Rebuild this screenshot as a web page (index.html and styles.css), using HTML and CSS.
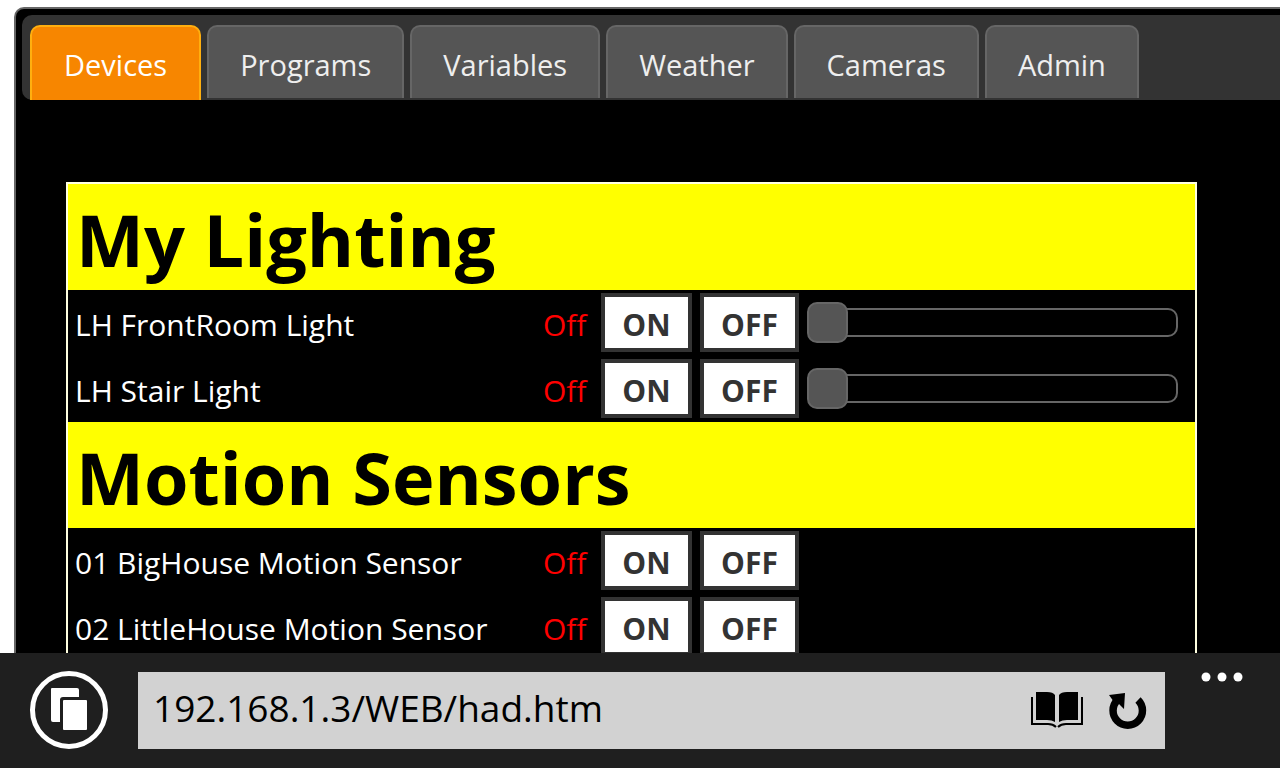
FILE: index.html
```
<!DOCTYPE html>
<html lang="en">
<head>
	<meta charset="utf-8">
	<title>Devices</title>
	<link rel="stylesheet" href="styles.css">
</head>
<body>
	<main class="view">
		<div class="panel">
			<nav class="tabs">
				<a class="tab active" href="#devices">Devices</a>
				<a class="tab" href="#programs">Programs</a>
				<a class="tab" href="#variables">Variables</a>
				<a class="tab" href="#weather">Weather</a>
				<a class="tab" href="#cameras">Cameras</a>
				<a class="tab" href="#admin">Admin</a>
			</nav>

			<table class="devices" id="devices">
				<colgroup>
					<col>
					<col class="col-status">
					<col class="col-on">
					<col class="col-off">
					<col class="col-level">
				</colgroup>
				<tbody>
					<tr><th class="group" colspan="5">My Lighting</th></tr>
					<tr>
						<th class="name" scope="row">LH FrontRoom Light</th>
						<td class="status">Off</td>
						<td><button class="switch" type="button">ON</button></td>
						<td><button class="switch" type="button">OFF</button></td>
						<td><input class="level" type="range" min="0" max="100" value="0" aria-label="LH FrontRoom Light"></td>
					</tr>
					<tr>
						<th class="name" scope="row">LH Stair Light</th>
						<td class="status">Off</td>
						<td><button class="switch" type="button">ON</button></td>
						<td><button class="switch" type="button">OFF</button></td>
						<td><input class="level" type="range" min="0" max="100" value="0" aria-label="LH Stair Light"></td>
					</tr>
				</tbody>
				<tbody>
					<tr><th class="group" colspan="5">Motion Sensors</th></tr>
					<tr>
						<th class="name" scope="row">01 BigHouse Motion Sensor</th>
						<td class="status">Off</td>
						<td><button class="switch" type="button">ON</button></td>
						<td><button class="switch" type="button">OFF</button></td>
						<td></td>
					</tr>
					<tr>
						<th class="name" scope="row">02 LittleHouse Motion Sensor</th>
						<td class="status">Off</td>
						<td><button class="switch" type="button">ON</button></td>
						<td><button class="switch" type="button">OFF</button></td>
						<td></td>
					</tr>
				</tbody>
			</table>
		</div>
	</main>

	<footer class="bar">
		<button class="icon-btn" type="button" aria-label="Tabs">
			<svg width="80" height="80" viewBox="0 0 80 80">
				<circle cx="40" cy="39" r="36.500" fill="none" stroke="#fff" stroke-width="5"/>
				<path fill="#fff" d="M23 17h25q2 0 2 2v7H34q-3 0-3 3v22h-7q-2 0-2-2V18q0-1 1-1z"/>
				<rect x="34" y="29" width="24" height="30" rx="1" fill="#fff"/>
			</svg>
		</button>
		<form class="address">
			<input class="url" type="text" aria-label="Address" value="192.168.1.3/WEB/had.htm">
			<button class="icon-btn" type="button" aria-label="Reading view">
				<svg width="52" height="38" viewBox="0 0 52 38">
					<path d="M5 0h11q6 0 8 3v27q-3-2-8-2H5zM47 0H36q-6 0-8 3v27q3-2 8-2h11z"/>
					<path fill="none" stroke="#000" stroke-width="2" d="M1 5v27h16q5 0 8 3M51 5v27H35q-5 0-8 3"/>
				</svg>
			</button>
			<button class="icon-btn" type="button" aria-label="Refresh">
				<svg width="38" height="38" viewBox="0 0 38 38">
					<path fill="none" stroke="#000" stroke-width="7.500" d="M29 8A14.700 14.700 0 1 1 8.500 8"/>
					<path d="M0 3l16-2-1 16-5-5-5-2z"/>
				</svg>
			</button>
		</form>
		<button class="icon-btn more" type="button" aria-label="More">
			<svg width="42" height="10" viewBox="0 0 42 10">
				<g fill="#fff"><circle cx="5" cy="5" r="4.500"/><circle cx="21" cy="5" r="4.500"/><circle cx="37" cy="5" r="4.500"/></g>
			</svg>
		</button>
	</footer>
</body>
</html>
```
FILE: styles.css
```
* {
  box-sizing: border-box;
}
body {
  margin: 0;
  height: 100vh;
  display: flex;
  flex-direction: column;
  font-family: "Open Sans", "Noto Sans", sans-serif;
  font-size: 30px;
  background-color: #fff;
}

/* page */
.view {
  flex: 1;
  min-height: 0;
  overflow: hidden;
  padding: 7px 0 0 14px;
}
.panel {
  min-height: 100%;
  padding: 6px 0 0 6px;
  border: 2px solid #666;
  border-width: 2px 0 0 2px;
  border-radius: 10px 0 0 0;
  background-color: #000;
}

/* tabs */
.tabs {
  display: flex;
  align-items: flex-start;
  gap: 6px;
  height: 85px;
  padding: 10px 8px 0;
  border-radius: 10px 0 0 10px;
  background-color: #333;
}
.tab {
  height: 73px;
  padding: 0 31px;
  border: 2px solid #666;
  border-bottom: 0;
  border-radius: 10px 10px 0 0;
  background-color: #555;
  color: #eee;
  font-size: 29px;
  line-height: 76px;
  text-decoration: none;
}
.tab.active {
  height: 75px;
  padding: 0 32px;
  border-color: #ffaf0f;
  background-color: #f78600;
  color: #fff;
}

/* device list */
.devices {
  width: calc(100% - 127px);
  margin: 82px 0 0 44px;
  border: 2px solid #ffffe0;
  border-collapse: separate;
  border-spacing: 0;
  table-layout: fixed;
  color: #fff;
}
.col-status {
  width: 61px;
}
.col-on {
  width: 99px;
}
.col-off {
  width: 107px;
}
.col-level {
  width: 388px;
}
.devices td {
  height: 66px;
  padding: 0 8px 2px 0;
  vertical-align: middle;
}
.devices .group {
  height: 106px;
  padding: 6px 8px 2px;
  background-color: #ff0;
  color: #000;
  font-size: 72px;
  line-height: 98px;
  text-align: left;
}
.devices .name {
  padding: 2px 7px 0;
  font-weight: normal;
  text-align: left;
  white-space: nowrap;
}
.devices .status {
  padding: 2px 0 0 3px;
  color: #f00;
}
.switch {
  display: block;
  width: 100%;
  height: 59px;
  padding: 4px 0 0;
  border: 4px solid #333;
  background-color: #fff;
  color: #333;
  font: bold 30px "Open Sans", "Noto Sans", sans-serif;
}
.level {
  display: block;
  width: calc(100% - 9px);
  height: 41px;
  margin: 0;
  background: none;
  -webkit-appearance: none;
  appearance: none;
}
.level::-webkit-slider-runnable-track {
  display: flex;
  align-items: center;
  height: 29px;
  border: 2px solid #666;
  border-radius: 10px;
}
.level::-webkit-slider-thumb {
  width: 41px;
  height: 41px;
  margin: -8px 0 -8px -2px;
  border: 2px solid #666;
  border-radius: 10px;
  background-color: #555;
  -webkit-appearance: none;
  appearance: none;
}

/* browser bar */
.bar {
  display: flex;
  align-items: center;
  height: 115px;
  padding: 0 37px 0 29px;
  background-color: #1f1f1f;
}
.icon-btn {
  display: block;
  flex: none;
  padding: 0;
  border: 0;
  background: none;
}
.icon-btn svg {
  display: block;
}
.address {
  display: flex;
  flex: 1;
  align-items: center;
  gap: 26px;
  height: 77px;
  margin: 0 36px 0 29px;
  padding: 0 18px 0 15px;
  background-color: #d2d2d2;
}
.url {
  flex: 1;
  min-width: 0;
  height: 77px;
  padding: 0 0 6px;
  border: 0;
  background: none;
  color: #000;
  font: 37px "Open Sans", "Noto Sans", sans-serif;
}
.more {
  align-self: flex-start;
  margin-top: 19px;
}
```
